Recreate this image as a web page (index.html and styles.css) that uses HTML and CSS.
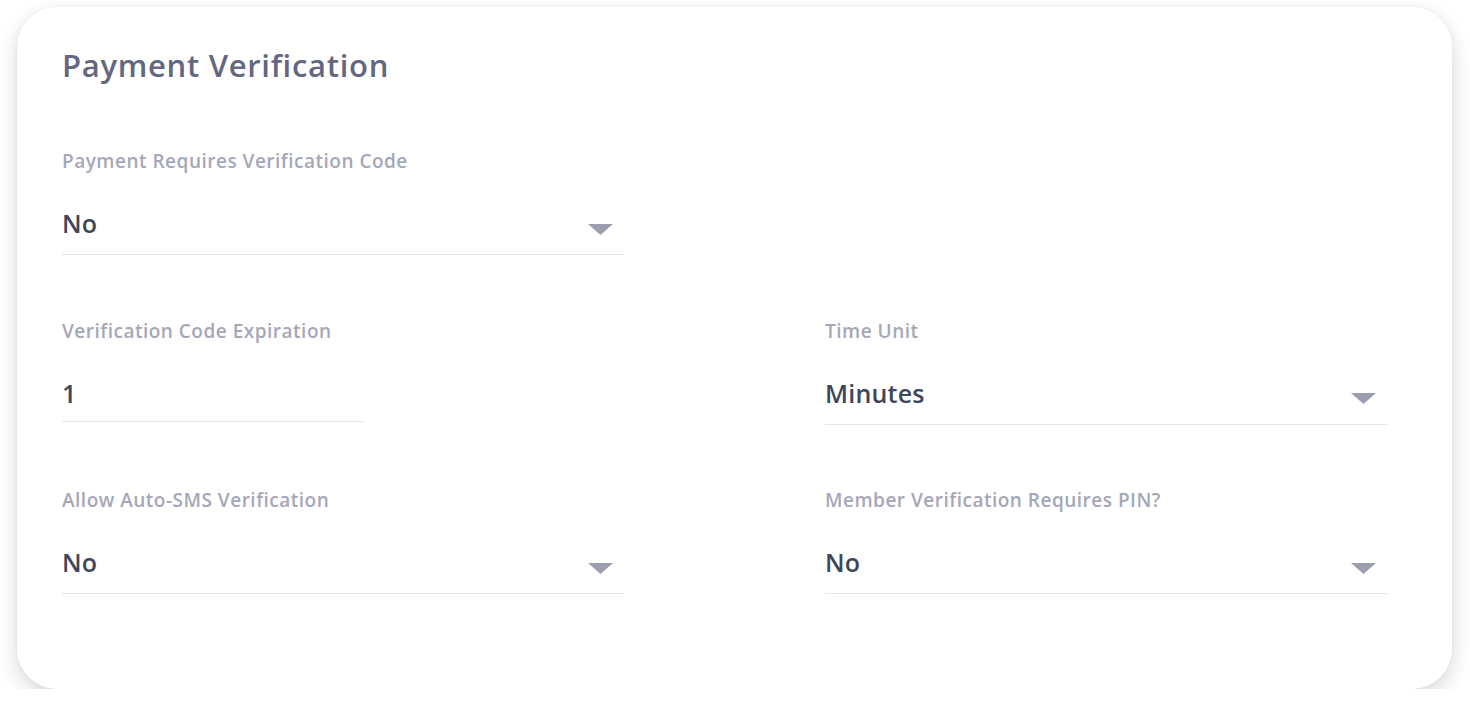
FILE: index.html
```html
<!DOCTYPE html>
<html lang="en">
<head>
<meta charset="utf-8">
<title>Payment Verification</title>
<link rel="stylesheet" href="styles.css">
</head>
<body>
<div class="page">
  <section class="card">
    <h2 class="card-title">Payment Verification</h2>
    <div class="form">
      <div class="row">
        <div class="field">
          <div class="label">Payment Requires Verification Code</div>
          <div class="control select">
            <span class="value">No</span>
            <svg class="caret" width="25" height="11" viewBox="0 0 25 11"><path d="M0 0 H25 L12.5 11 Z" fill="#9d9db0"/></svg>
          </div>
        </div>
        <div class="field"></div>
      </div>
      <div class="row">
        <div class="field">
          <div class="label">Verification Code Expiration</div>
          <div class="control input short">
            <span class="value">1</span>
          </div>
        </div>
        <div class="field">
          <div class="label">Time Unit</div>
          <div class="control select">
            <span class="value">Minutes</span>
            <svg class="caret" width="25" height="11" viewBox="0 0 25 11"><path d="M0 0 H25 L12.5 11 Z" fill="#9d9db0"/></svg>
          </div>
        </div>
      </div>
      <div class="row">
        <div class="field">
          <div class="label">Allow Auto-SMS Verification</div>
          <div class="control select">
            <span class="value">No</span>
            <svg class="caret" width="25" height="11" viewBox="0 0 25 11"><path d="M0 0 H25 L12.5 11 Z" fill="#9d9db0"/></svg>
          </div>
        </div>
        <div class="field">
          <div class="label">Member Verification Requires PIN?</div>
          <div class="control select">
            <span class="value">No</span>
            <svg class="caret" width="25" height="11" viewBox="0 0 25 11"><path d="M0 0 H25 L12.5 11 Z" fill="#9d9db0"/></svg>
          </div>
        </div>
      </div>
    </div>
  </section>
</div>
</body>
</html>
```

FILE: styles.css
```css
* { box-sizing: border-box; }
html, body {
  margin: 0;
  padding: 0;
  background: #ffffff;
}
body {
  font-family: "Open Sans", "Noto Sans", sans-serif;
}
.page {
  padding: 7px 18px 0 17px;
}
.card {
  width: 1435px;
  height: 682px;
  background: #ffffff;
  border-radius: 40px;
  box-shadow: 0 8px 22px rgba(0, 0, 0, 0.15), 0 0 6px rgba(0, 0, 0, 0.04);
  padding: 38px 65px 0 45px;
}
.card-title {
  margin: 0;
  font-size: 31px;
  line-height: 40px;
  font-weight: 600;
  letter-spacing: 0.7px;
  color: #636781;
}
.form {
  margin-top: 64px;
  display: flex;
  flex-direction: column;
  gap: 63.5px;
}
.row {
  display: grid;
  grid-template-columns: 562px 562px;
  column-gap: 201px;
}
.label {
  font-size: 19px;
  line-height: 24px;
  font-weight: 600;
  letter-spacing: 0.5px;
  color: #a5a7b8;
  margin-bottom: 36px;
}
.control {
  display: flex;
  align-items: center;
  justify-content: space-between;
  border-bottom: 1px solid #e6e6ea;
  padding-bottom: 13px;
}
.control.input {
  padding-bottom: 10px;
}
.control.short {
  width: 301px;
}
.value {
  font-size: 25px;
  line-height: 32px;
  font-weight: 600;
  letter-spacing: 0.2px;
  color: #3f4659;
  position: relative;
  top: -2px;
}
.caret {
  display: block;
  margin-right: 11px;
  margin-top: 8px;
}
```
